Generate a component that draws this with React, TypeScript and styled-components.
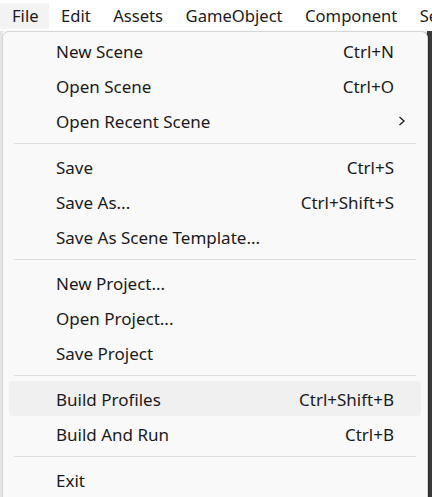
import React from 'react';
import styled, { createGlobalStyle } from 'styled-components';

const GlobalStyle = createGlobalStyle`
  html, body {
    margin: 0;
    padding: 0;
    width: 432px;
    height: 497px;
    overflow: hidden;
    background: #ffffff;
  }
  * {
    box-sizing: border-box;
  }
`;

const Window = styled.div`
  width: 432px;
  height: 497px;
  display: flex;
  flex-direction: column;
  font-family: 'Noto Sans', 'Segoe UI', sans-serif;
  color: #1b1b1b;
  overflow: hidden;
`;

const MenuBar = styled.div`
  height: 31px;
  display: flex;
  align-items: center;
  background: #ffffff;
  white-space: nowrap;
  font-size: 16.6px;
`;

const BarItem = styled.div<{ $open?: boolean }>`
  height: 26px;
  padding: 0 10.5px 0 12px;
  display: flex;
  align-items: center;
  background: ${(p) => (p.$open ? '#f3f3f3' : 'transparent')};
`;

const Editor = styled.div`
  position: relative;
  flex: 1;
  background: linear-gradient(to right, #e6e6e6 0, #e6e6e6 3px, #f9f9f9 3px, #f9f9f9 427px, #3a3a3a 427px);
`;

const Dropdown = styled.div`
  position: absolute;
  top: 0;
  left: 2px;
  width: 426px;
  height: 480px;
  background: #f9f9f9;
  border: 1px solid #d6d6d6;
  border-radius: 7px 7px 0 0;
  padding: 1px 6px 0 6px;
  font-size: 17px;
  box-shadow: 1px 0 1px rgba(0, 0, 0, 0.25);
`;

const Item = styled.div<{ $hover?: boolean }>`
  height: 35px;
  display: flex;
  align-items: center;
  padding: 1px 27px 0 47px;
  border-radius: 4px;
  white-space: nowrap;
  background: ${(p) => (p.$hover ? '#f0f0f0' : 'transparent')};
`;

const Label = styled.span`
  flex: 1;
`;

const Shortcut = styled.span`
  text-align: right;
`;

const Chevron = styled.svg`
  width: 8px;
  height: 10px;
  margin-right: -12px;
  margin-top: 0;
`;

const Separator = styled.div`
  height: 1px;
  margin: 5px 5px;
  background: #dedede;
`;

type Entry = { label: string; shortcut?: string; sub?: boolean; hover?: boolean } | 'sep';

const entries: Entry[] = [
  { label: 'New Scene', shortcut: 'Ctrl+N' },
  { label: 'Open Scene', shortcut: 'Ctrl+O' },
  { label: 'Open Recent Scene', sub: true },
  'sep',
  { label: 'Save', shortcut: 'Ctrl+S' },
  { label: 'Save As...', shortcut: 'Ctrl+Shift+S' },
  { label: 'Save As Scene Template...' },
  'sep',
  { label: 'New Project...' },
  { label: 'Open Project...' },
  { label: 'Save Project' },
  'sep',
  { label: 'Build Profiles', shortcut: 'Ctrl+Shift+B', hover: true },
  { label: 'Build And Run', shortcut: 'Ctrl+B' },
  'sep',
  { label: 'Exit' },
];

const App: React.FC = () => {
  return (
    <>
      <GlobalStyle />
      <Window>
        <MenuBar>
          <BarItem $open>File</BarItem>
          <BarItem>Edit</BarItem>
          <BarItem>Assets</BarItem>
          <BarItem>GameObject</BarItem>
          <BarItem>Component</BarItem>
          <BarItem>Services</BarItem>
        </MenuBar>
        <Editor>
          <Dropdown>
            {entries.map((e, i) =>
              e === 'sep' ? (
                <Separator key={i} />
              ) : (
                <Item key={i} $hover={e.hover}>
                  <Label>{e.label}</Label>
                  {e.shortcut && <Shortcut>{e.shortcut}</Shortcut>}
                  {e.sub && (
                    <Chevron viewBox="0 0 8 10">
                      <path d="M1.5 1 L6 5 L1.5 9" fill="none" stroke="#1b1b1b" strokeWidth="1.3" />
                    </Chevron>
                  )}
                </Item>
              )
            )}
          </Dropdown>
        </Editor>
      </Window>
    </>
  );
};

export default App;
